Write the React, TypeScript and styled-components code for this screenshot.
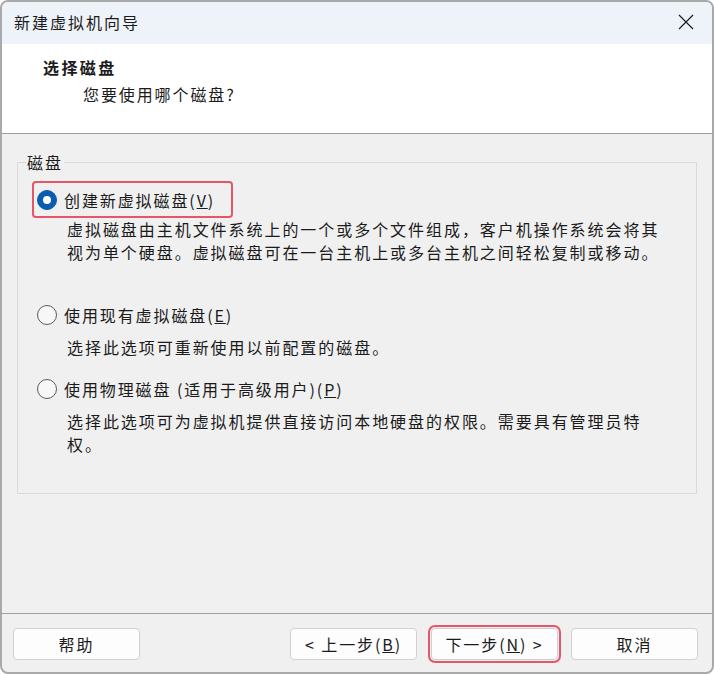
import React from 'react'
import styled, { createGlobalStyle } from 'styled-components'

const GlobalStyle = createGlobalStyle`
  html, body {
    margin: 0;
    padding: 0;
    background: #ffffff;
  }
  * {
    box-sizing: border-box;
  }
  body {
    font-family: "Noto Sans CJK SC", "Noto Sans", sans-serif;
    color: #1b1b1b;
  }
`

const Window = styled.div`
  width: 714px;
  height: 674px;
  border: 2px solid #a9a9a9;
  border-radius: 8px;
  overflow: hidden;
  display: flex;
  flex-direction: column;
  background: #f0f0f0;
`

const TitleBar = styled.div`
  height: 42px;
  flex: none;
  background: #eef2f9;
  display: flex;
  align-items: center;
  justify-content: space-between;
  padding: 0 17px 0 12px;
`

const Title = styled.div`
  font-size: 16px;
  letter-spacing: 2px;
  line-height: 24px;
  padding-bottom: 2px;
`

const CloseButton = styled.div`
  width: 18px;
  height: 18px;
  display: flex;
  align-items: center;
  justify-content: center;
  margin-bottom: 2px;
`

const Header = styled.div`
  height: 90px;
  flex: none;
  background: #ffffff;
  border-bottom: 1px solid #a0a0a0;
  padding: 11px 0 0 41px;
`

const HeaderTitle = styled.div`
  font-size: 16px;
  font-weight: 700;
  letter-spacing: 2.4px;
  line-height: 24px;
`

const HeaderSub = styled.div`
  font-size: 16px;
  letter-spacing: 1.9px;
  line-height: 24px;
  margin: 3px 0 0 40px;
`

const Body = styled.div`
  flex: 1;
  padding: 16px 15px 0 15px;
`

const GroupBox = styled.fieldset`
  margin: 0;
  border: 1px solid #dadada;
  padding: 0 14px 37px 14px;
  min-width: 0;
`

const Legend = styled.legend`
  font-size: 16px;
  letter-spacing: 1.9px;
  line-height: 24px;
  padding: 0 1px;
  margin-left: -6px;
`

const Option = styled.div<{ $top: number }>`
  margin-top: ${({ $top }) => $top}px;
`

const OptionLabel = styled.div<{ $focused?: boolean }>`
  display: inline-flex;
  align-items: center;
  height: 37px;
  padding: 0 16px 0 3px;
  border: 2px solid ${({ $focused }) => ($focused ? '#e5566a' : 'transparent')};
  border-radius: 4px;
  font-size: 16px;
  letter-spacing: 1.9px;
  line-height: 24px;
  white-space: nowrap;
`

const Radio = styled.span<{ $checked?: boolean }>`
  width: 20px;
  height: 20px;
  border-radius: 50%;
  flex: none;
  margin-right: 7px;
  display: flex;
  align-items: center;
  justify-content: center;
  background: ${({ $checked }) => ($checked ? '#0a5cb0' : '#f7f7f7')};
  border: 1px solid ${({ $checked }) => ($checked ? '#0a5cb0' : '#5c5c5c')};

  &::after {
    content: '';
    display: ${({ $checked }) => ($checked ? 'block' : 'none')};
    width: 8px;
    height: 8px;
    border-radius: 50%;
    background: #ffffff;
  }
`

const Description = styled.div<{ $top: number }>`
  margin: ${({ $top }) => $top}px 0 0 35px;
  font-size: 16px;
  letter-spacing: 1.95px;
  line-height: 23px;
  white-space: nowrap;
`

const Footer = styled.div`
  flex: none;
  height: 59px;
  border-top: 1px solid #a0a0a0;
  padding: 14px 14px 0 11px;
  display: flex;
  align-items: flex-start;
`

const Spacer = styled.div`
  flex: 1;
`

const Button = styled.div<{ $focused?: boolean; $gap?: number }>`
  width: 127px;
  height: 32px;
  margin-left: ${({ $gap }) => $gap ?? 0}px;
  background: #fdfdfd;
  border: 1px solid #d0d0d0;
  border-radius: 4px;
  display: flex;
  align-items: center;
  justify-content: center;
  font-size: 16px;
  letter-spacing: 1.9px;
  line-height: 24px;
  white-space: nowrap;
  outline: ${({ $focused }) => ($focused ? '2px solid #e5566a' : 'none')};
  outline-offset: 1px;
`

const options = [
  {
    label: '创建新虚拟磁盘',
    key: 'V',
    checked: true,
    top: 7,
    descTop: 0,
    lines: [
      '虚拟磁盘由主机文件系统上的一个或多个文件组成，客户机操作系统会将其',
      '视为单个硬盘。虚拟磁盘可在一台主机上或多台主机之间轻松复制或移动。',
    ],
  },
  {
    label: '使用现有虚拟磁盘',
    key: 'E',
    checked: false,
    top: 32,
    descTop: 3,
    lines: ['选择此选项可重新使用以前配置的磁盘。'],
  },
  {
    label: '使用物理磁盘 (适用于高级用户)',
    key: 'P',
    checked: false,
    top: 11,
    descTop: 3,
    lines: [
      '选择此选项可为虚拟机提供直接访问本地硬盘的权限。需要具有管理员特',
      '权。',
    ],
  },
]

const App = () => {
  return (
    <Window>
      <GlobalStyle />
      <TitleBar>
        <Title>新建虚拟机向导</Title>
        <CloseButton>
          <svg width="16" height="16" viewBox="0 0 16 16">
            <path d="M1 1L15 15M15 1L1 15" stroke="#1b1b1b" strokeWidth="1.2" />
          </svg>
        </CloseButton>
      </TitleBar>
      <Header>
        <HeaderTitle>选择磁盘</HeaderTitle>
        <HeaderSub>您要使用哪个磁盘?</HeaderSub>
      </Header>
      <Body>
        <GroupBox>
          <Legend>磁盘</Legend>
          {options.map((opt) => (
            <Option key={opt.key} $top={opt.top}>
              <OptionLabel $focused={opt.checked}>
                <Radio $checked={opt.checked} />
                {opt.label}(<u>{opt.key}</u>)
              </OptionLabel>
              <Description $top={opt.descTop}>
                {opt.lines.map((line) => (
                  <div key={line}>{line}</div>
                ))}
              </Description>
            </Option>
          ))}
        </GroupBox>
      </Body>
      <Footer>
        <Button>帮助</Button>
        <Spacer />
        <Button>
          &lt; 上一步(<u>B</u>)
        </Button>
        <Button $focused $gap={14}>
          下一步(<u>N</u>) &gt;
        </Button>
        <Button $gap={13}>取消</Button>
      </Footer>
    </Window>
  )
}

export default App
